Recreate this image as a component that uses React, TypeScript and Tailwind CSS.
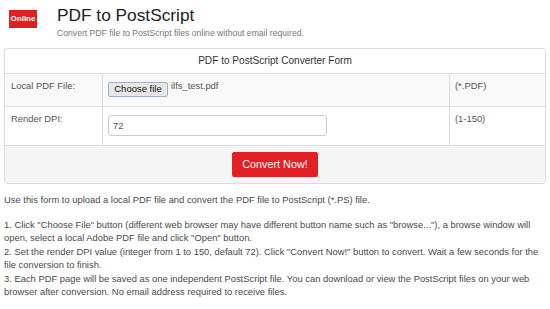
import React from 'react';

const font = { fontFamily: '"Liberation Sans", Arial, sans-serif' };

const Row: React.FC<{ label: string; hint: string; className: string; children: React.ReactNode }> = ({ label, hint, className, children }) => (
    <div className={`grid grid-cols-[98px_347px_1fr] border-b border-[#ddd] ${className}`}>
        <div className="border-r border-[#ddd] pl-[6px] pt-[5px] text-[9.4px] leading-[13.4px] text-[#555]">{label}</div>
        <div className="border-r border-[#ddd] pl-[5px]">{children}</div>
        <div className="pl-[5px] pt-[5px] text-[9.4px] leading-[13.4px] text-[#555]">{hint}</div>
    </div>
);

export default function App() {
    return (
        <div className="w-[550px] h-[309px] bg-white overflow-hidden" style={font}>
            <div className="flex">
                <div className="ml-[9px] mt-[10px] w-[28px] h-[18px] bg-[#e0201f] flex items-center justify-center text-white font-bold text-[8px] leading-none">
                    Online
                </div>
                <div className="ml-[20px] mt-[5px]">
                    <h1 className="text-[17.3px] leading-[20px] text-[#222]">PDF to PostScript</h1>
                    <p className="mt-[3px] text-[8.65px] leading-[11px] text-[#777]">
                        Convert PDF file to PostScript files online without email required.
                    </p>
                </div>
            </div>

            <div className="ml-[4px] mt-[9px] w-[542px] border border-[#ddd] rounded-[3px] overflow-hidden">
                <div className="h-[25px] border-b border-[#ddd] flex items-center justify-center text-[10.1px] text-[#333]">
                    PDF to PostScript Converter Form
                </div>
                <Row label="Local PDF File:" hint="(*.PDF)" className="h-[33px] bg-[#f9f9f9]">
                    <div className="flex items-start pt-[5px]">
                        <span className="mt-[3px] h-[15px] w-[60px] flex items-center justify-center border border-[#9fb0cc] rounded-[2px] bg-[#e8e8e8] text-[9.5px] text-[#111]">
                            Choose file
                        </span>
                        <span className="ml-[3px] text-[9.4px] leading-[13.4px] text-[#555]">ilfs_test.pdf</span>
                    </div>
                </Row>
                <Row label="Render DPI:" hint="(1-150)" className="h-[39px] bg-white">
                    <div className="pt-[5px]">
                        <input
                            readOnly
                            value="72"
                            className="w-[219px] h-[21px] border border-[#ccc] rounded-[3px] px-[4px] text-[9.4px] text-[#555] outline-none"
                            style={font}
                        />
                    </div>
                </Row>
                <div className="h-[37px] bg-[#f5f5f5] flex justify-center pt-[6px]">
                    <button className="w-[86px] h-[25px] bg-[#e11f25] text-white text-[10.8px] rounded-[2px]" style={font}>
                        Convert Now!
                    </button>
                </div>
            </div>

            <div className="mx-[4px] mt-[9px] text-[9.4px] leading-[13.4px] text-[#4a4a4a]">
                <p>Use this form to upload a local PDF file and convert the PDF file to PostScript (*.PS) file.</p>
                <p className="mt-[11.6px]">
                    1. Click "Choose File" button (different web browser may have different button name such as "browse..."), a browse window will open, select a local Adobe PDF file and click "Open" button.
                    <br />
                    2. Set the render DPI value (integer from 1 to 150, default 72). Click "Convert Now!" button to convert. Wait a few seconds for the file conversion to finish.
                    <br />
                    3. Each PDF page will be saved as one independent PostScript file. You can download or view the PostScript files on your web browser after conversion. No email address required to receive files.
                </p>
            </div>
        </div>
    );
}
